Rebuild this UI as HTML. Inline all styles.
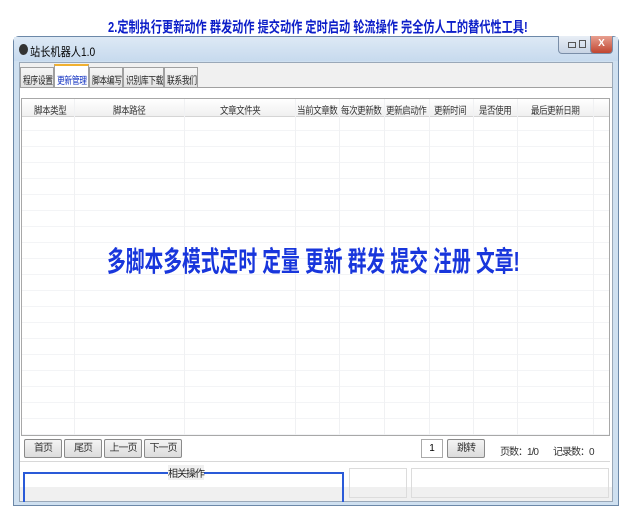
<!DOCTYPE html>
<html><head><meta charset="utf-8"><style>
*{margin:0;padding:0;box-sizing:border-box}
body{width:634px;height:494px;background:#fff;position:relative;overflow:hidden;font-family:"Liberation Sans","Noto Sans CJK SC",sans-serif}
.a{position:absolute;white-space:nowrap}
.sq{transform-origin:left top}
.top{left:108px;top:16px;font-size:15px;font-weight:bold;color:#0c1ec8;transform:scaleX(0.745)}
.win{left:13px;top:36px;width:606px;height:470px;background:#cfe0f0;border:1px solid #6c88a8;border-radius:6px 6px 0 0}
.tb{left:14px;top:37px;width:604px;height:24px;background:linear-gradient(#dde9f5,#c7daee)}
.title{left:30px;top:43px;font-size:12px;color:#000;transform:scaleX(0.85)}
.inner{left:19px;top:62px;width:594px;height:440px;background:#f0f0f0;border:1px solid #9aa8b8}
.tab{top:67px;height:20px;font-size:10px;padding:4px 0 0 2px;border:1px solid #a0a0a0;border-bottom:none;background:linear-gradient(#f6f6f6,#e2e2e2);color:#222;overflow:hidden}
.tab span{display:inline-block;transform:scaleX(0.78);transform-origin:left top;letter-spacing:-0.5px}
.tab.on{top:64px;height:24px;padding-top:6px;background:#fff;border-top:2px solid #f0b030;color:#1030c0}
.panel{left:20px;top:87px;width:592px;height:400px;background:#fff;border-top:1px solid #a0a0a0}
.grid{left:21px;top:98px;width:589px;height:338px;border:1px solid #a8a8a8;background:
repeating-linear-gradient(to bottom,transparent 0 15px,#f3f4f6 15px 16px);}
.hdr{left:22px;top:99px;width:587px;height:18px;background:linear-gradient(#fff,#f0f0f0);border-bottom:1px solid #d5d5d5}
.vl{top:99px;width:1px;height:336px;background:#f0f1f3}
.h{top:102px;font-size:10px;color:#333;letter-spacing:-0.5px;transform:scaleX(0.85);transform-origin:left top}
.big{left:107px;top:240px;font-size:28px;font-weight:bold;color:#1836dc;transform:scaleX(0.67)}
.btn{top:439px;height:19px;width:38px;border:1px solid #8a8a8a;border-radius:2px;background:linear-gradient(#f4f4f4,#dcdcdc);font-size:10px;text-align:center;line-height:17px;color:#333;letter-spacing:-1px}
.lbl{top:443px;font-size:10px;color:#333;letter-spacing:-1px}
.ctl{top:36px;height:18px;border:1px solid #7a8ea8;border-top:none;border-radius:0 0 4px 4px;background:linear-gradient(#e8eef6,#c8d4e4);font-size:10px;text-align:center;color:#445}
</style></head><body>
<div class="a sq top">2.定制执行更新动作 群发动作 提交动作 定时启动 轮流操作 完全仿人工的替代性工具!</div>
<div class="a win"></div>
<div class="a tb"></div>
<div class="a" style="left:19px;top:44px;width:9px;height:11px;border-radius:50%;background:#333"></div>
<div class="a sq title">站长机器人1.0</div>
<div class="a ctl" style="left:558px;width:38px;"><span style="display:inline-block;width:8px;height:6px;border:1px solid #555;margin-top:6px"></span> <span style="display:inline-block;width:7px;height:8px;border:1px solid #555;margin-top:4px"></span></div>
<div class="a ctl" style="left:590px;width:23px;background:linear-gradient(#e8a090,#c04530);color:#fff;font-weight:bold;line-height:16px">X</div>
<div class="a inner"></div>
<div class="a tab" style="left:20px;width:34px"><span>程序设置</span></div>
<div class="a tab on" style="left:54px;width:35px"><span>更新管理</span></div>
<div class="a tab" style="left:89px;width:34px"><span>脚本编写</span></div>
<div class="a tab" style="left:123px;width:41px"><span>识别库下载</span></div>
<div class="a tab" style="left:164px;width:34px"><span>联系我们</span></div>
<div class="a panel"></div>
<div class="a grid"></div>
<div class="a hdr"></div>
<div class="a vl" style="left:74px"></div><div class="a vl" style="left:184px"></div><div class="a vl" style="left:295px"></div><div class="a vl" style="left:339px"></div><div class="a vl" style="left:384px"></div><div class="a vl" style="left:429px"></div><div class="a vl" style="left:473px"></div><div class="a vl" style="left:517px"></div><div class="a vl" style="left:593px"></div>
<div class="a h" style="left:34px">脚本类型</div>
<div class="a h" style="left:113px">脚本路径</div>
<div class="a h" style="left:220px">文章文件夹</div>
<div class="a h" style="left:297px">当前文章数</div>
<div class="a h" style="left:341px">每次更新数</div>
<div class="a h" style="left:386px">更新启动作</div>
<div class="a h" style="left:434px">更新时间</div>
<div class="a h" style="left:479px">是否使用</div>
<div class="a h" style="left:531px">最后更新日期</div>
<div class="a sq big">多脚本多模式定时 定量 更新 群发 提交 注册 文章!</div>
<div class="a btn" style="left:24px">首页</div>
<div class="a btn" style="left:64px">尾页</div>
<div class="a btn" style="left:104px">上一页</div>
<div class="a btn" style="left:144px">下一页</div>
<div class="a" style="left:421px;top:439px;width:22px;height:19px;border:1px solid #aaa;background:#fff;font-size:10px;text-align:center;line-height:17px">1</div>
<div class="a btn" style="left:447px">跳转</div>
<div class="a lbl" style="left:500px">页数：1/0</div>
<div class="a lbl" style="left:553px">记录数：0</div>
<div class="a" style="left:20px;top:461px;width:590px;height:1px;background:#d8d8d8"></div>
<div class="a" style="left:23px;top:472px;width:321px;height:30px;border:2px solid #2a5ad8;border-bottom:none"></div>
<div class="a" style="left:168px;top:465px;font-size:10px;color:#222;background:#f0f0f0;letter-spacing:-1px">相关操作</div>
<div class="a" style="left:349px;top:468px;width:58px;height:30px;border:1px solid #dcdcdc"></div>
<div class="a" style="left:411px;top:468px;width:198px;height:30px;border:1px solid #dcdcdc"></div>
</body></html>
